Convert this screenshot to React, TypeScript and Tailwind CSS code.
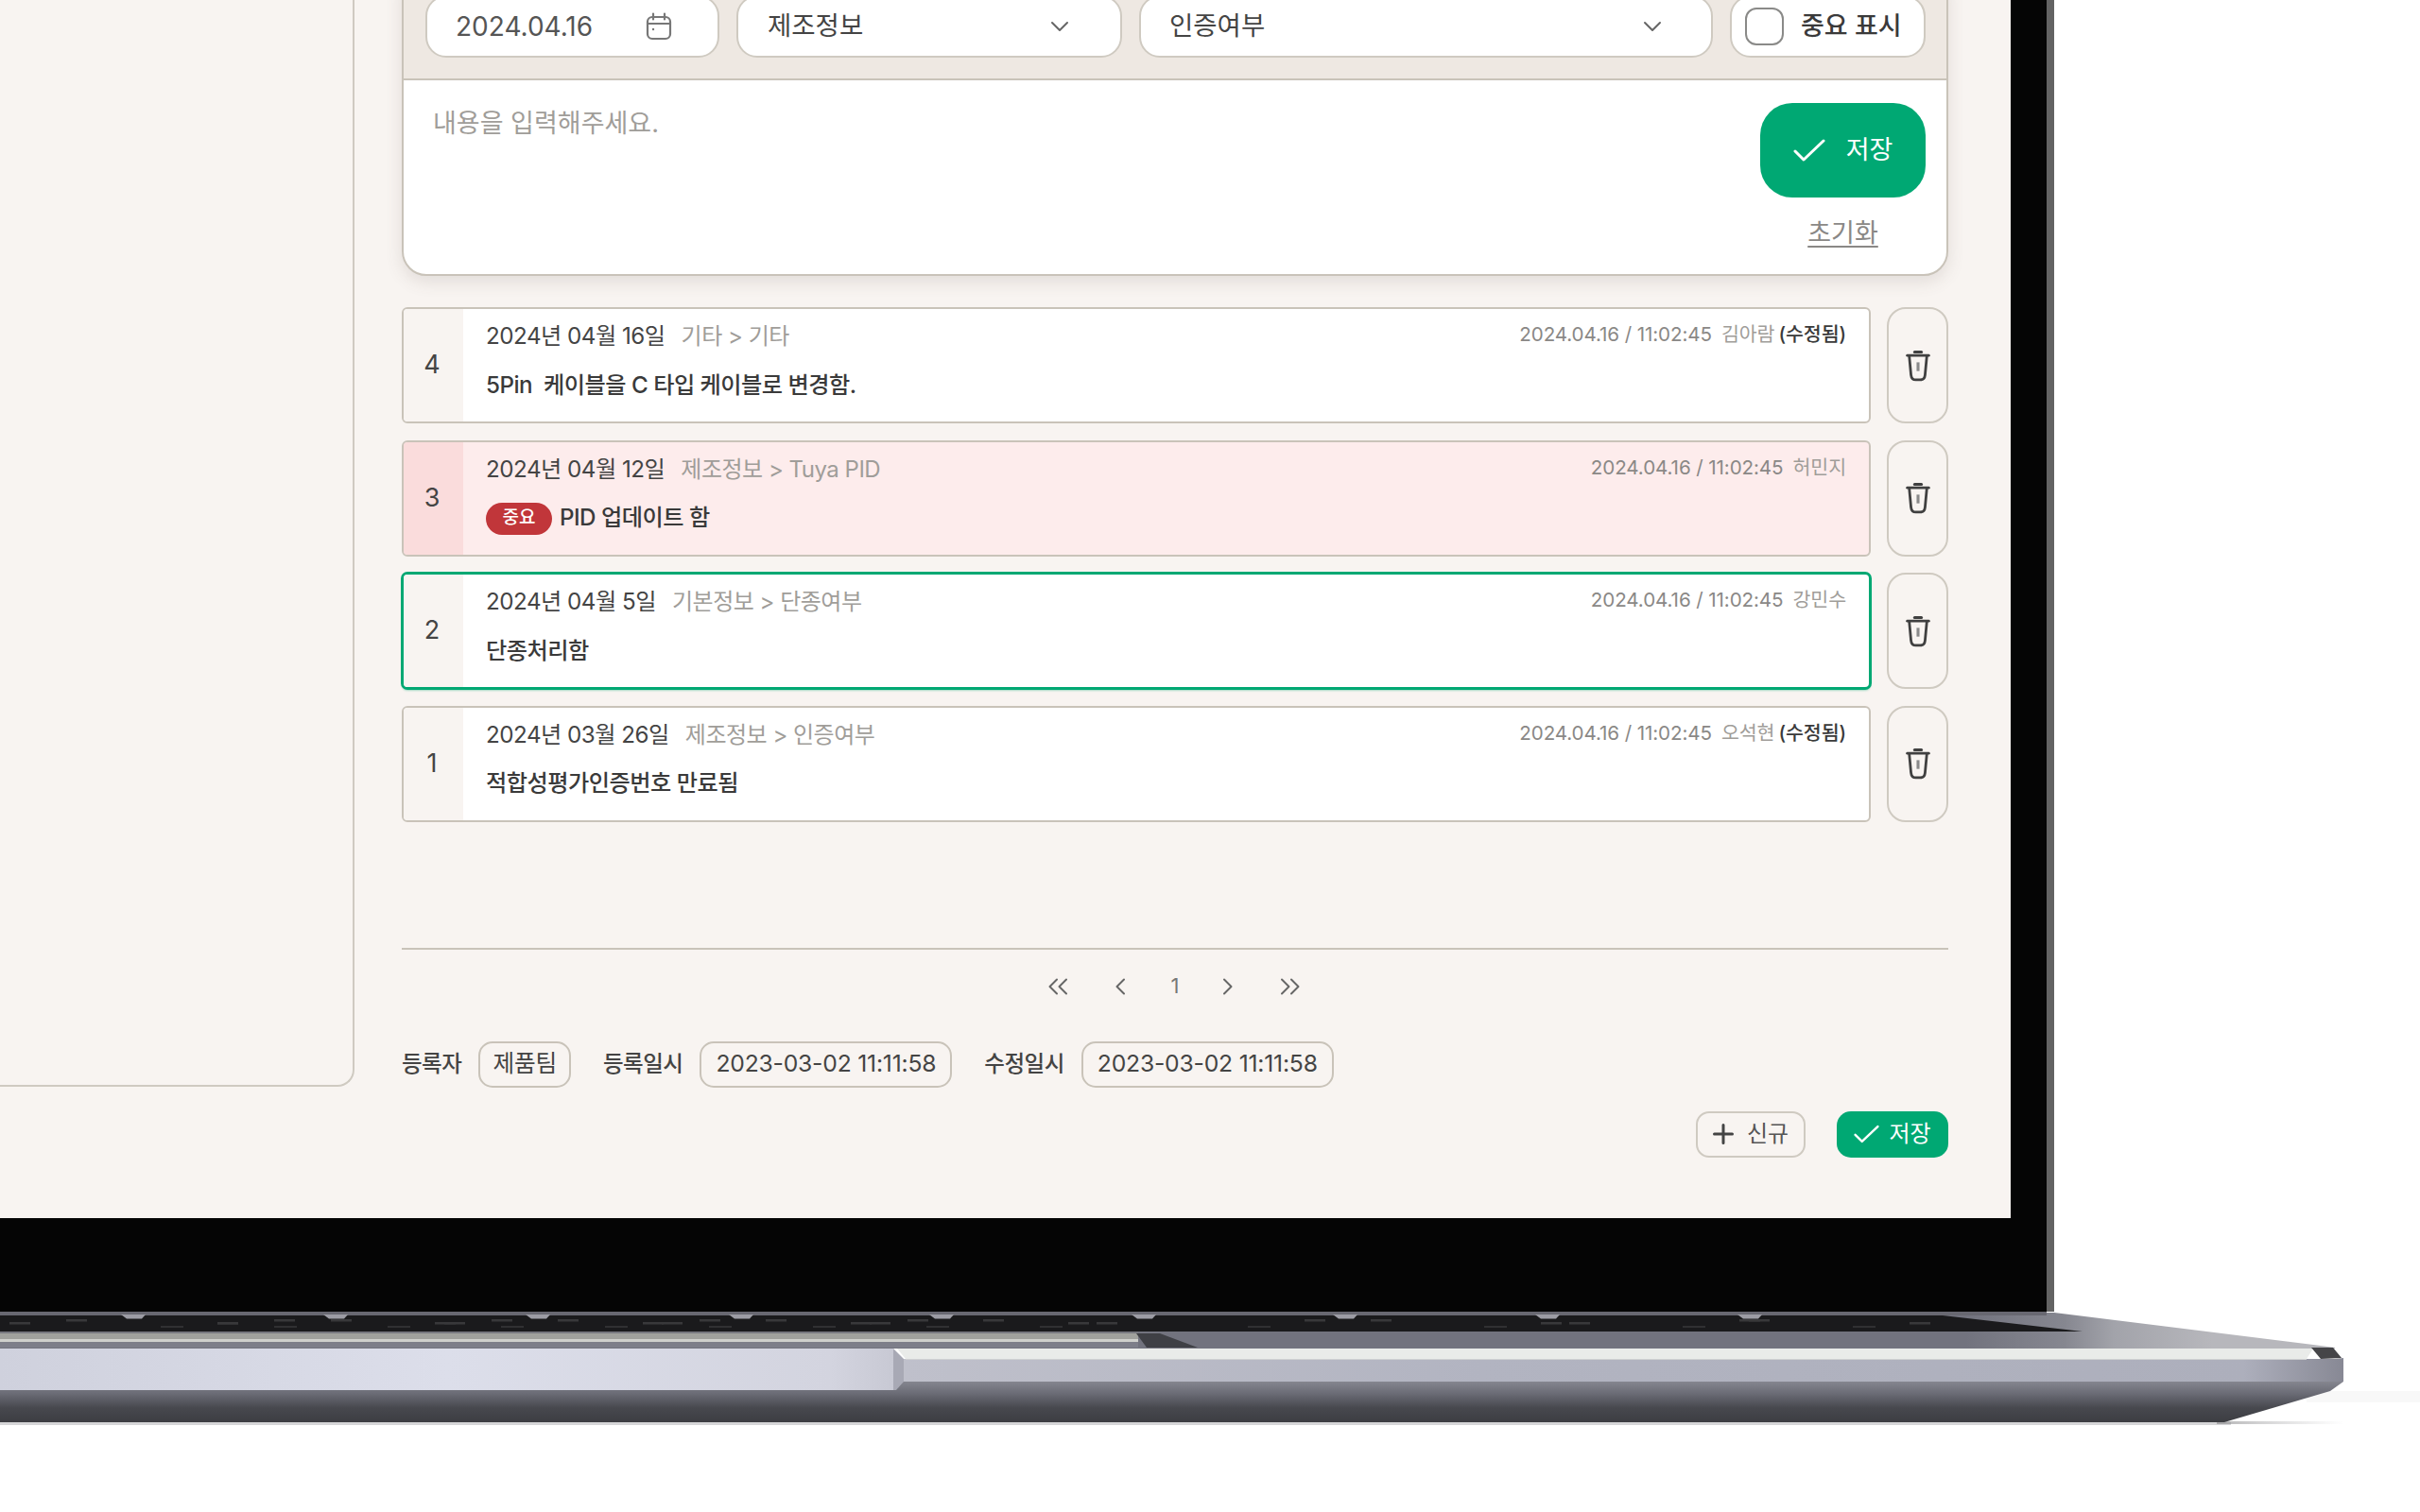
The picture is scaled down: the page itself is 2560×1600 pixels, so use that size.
import React from "react";

const FONT = "font-['Inter','Noto_Sans_CJK_KR',sans-serif]";

function Chevron() {
  return (
    <svg width="20" height="12" viewBox="0 0 20 12" fill="none" stroke="#666" strokeWidth="2" strokeLinecap="round" strokeLinejoin="round">
      <path d="M2 2l8 8 8-8" />
    </svg>
  );
}

function Calendar() {
  return (
    <svg width="28" height="30" viewBox="0 0 28 30" fill="none" stroke="#777" strokeWidth="2.2" strokeLinecap="round">
      <rect x="2" y="5" width="24" height="23" rx="5" />
      <path d="M2 12h24M8 1.5v6M20 1.5v6" />
      <circle cx="8" cy="18" r="1.2" fill="#777" stroke="none" />
    </svg>
  );
}

function Check({ w, h, sw }: { w: number; h: number; sw: number }) {
  return (
    <svg width={w} height={h} viewBox="0 0 34 24" fill="none" stroke="#fff" strokeWidth={sw} strokeLinecap="round" strokeLinejoin="round">
      <path d="M2 13l9 9L32 2" />
    </svg>
  );
}

function Trash() {
  return (
    <svg width="28" height="34" viewBox="0 0 26 33" fill="none" stroke="#404040" strokeWidth="2.7" strokeLinecap="round" strokeLinejoin="round">
      <path d="M2 6h22" />
      <path d="M9.5 2.5h7" strokeWidth="3" />
      <path d="M4 7l1.8 19c.3 3 2.3 5 5 5h4.4c2.7 0 4.7-2 5-5L22 7" />
      <path d="M13 13v9" strokeWidth="3" stroke="#8a8a8a" strokeLinecap="butt" />
    </svg>
  );
}

function ChevL({ double }: { double?: boolean }) {
  return (
    <svg width={double ? 22 : 12} height="18" viewBox={double ? "0 0 22 18" : "0 0 12 18"} fill="none" stroke="#666" strokeWidth="2" strokeLinecap="round" strokeLinejoin="round">
      <path d="M10 1.5L2.5 9l7.5 7.5" />
      {double && <path d="M20 1.5L12.5 9l7.5 7.5" />}
    </svg>
  );
}

function ChevR({ double }: { double?: boolean }) {
  return (
    <svg width={double ? 22 : 12} height="18" viewBox={double ? "0 0 22 18" : "0 0 12 18"} fill="none" stroke="#666" strokeWidth="2" strokeLinecap="round" strokeLinejoin="round">
      <path d="M2 1.5L9.5 9 2 16.5" />
      {double && <path d="M12 1.5L19.5 9 12 16.5" />}
    </svg>
  );
}

type Row = {
  n: number;
  date: string;
  path: string;
  meta: string;
  who: string;
  edited?: boolean;
  body: string;
  important?: boolean;
  active?: boolean;
};

const rows: Row[] = [
  { n: 4, date: "2024년 04월 16일", path: "기타 > 기타", meta: "2024.04.16 / 11:02:45", who: "김아람", edited: true, body: "5Pin  케이블을 C 타입 케이블로 변경함." },
  { n: 3, date: "2024년 04월 12일", path: "제조정보 > Tuya PID", meta: "2024.04.16 / 11:02:45", who: "허민지", body: "PID 업데이트 함", important: true },
  { n: 2, date: "2024년 04월 5일", path: "기본정보 > 단종여부", meta: "2024.04.16 / 11:02:45", who: "강민수", body: "단종처리함", active: true },
  { n: 1, date: "2024년 03월 26일", path: "제조정보 > 인증여부", meta: "2024.04.16 / 11:02:45", who: "오석현", edited: true, body: "적합성평가인증번호 만료됨" },
];

function LogRow({ r }: { r: Row }) {
  const frame = r.active
    ? "border-2 border-[#00a873] bg-white shadow-[0_0_0_1px_#00a873,0_2px_2px_rgba(0,168,115,0.35)]"
    : r.important
    ? "border-2 border-[#c9c3b9] bg-[#fdecec]"
    : "border-2 border-[#c9c3b9] bg-white";
  return (
    <div className="flex gap-[17px] h-[123px]">
      <div className={`flex-1 flex rounded-[6px] overflow-hidden ${frame}`}>
        <div className={`w-[63px] shrink-0 flex items-center justify-center pr-[3px] text-[27px] text-[#444] ${r.important ? "bg-[#fadcdc]" : "bg-[#f8f4f1]"}`}>
          {r.n}
        </div>
        <div className="flex-1 pl-[24px] pr-[24px] flex flex-col">
          <div className="flex justify-between h-[61px] items-center mt-[-1px]">
            <div className="flex items-center gap-[17px] tracking-[-0.5px] self-center">
              <span className="text-[24.2px] text-[#444]">{r.date}</span>
              <span className="text-[24px] text-[#a09d99]">{r.path}</span>
            </div>
            <div className="text-[20.6px] text-[#8a8886] self-start mt-[13px] flex gap-[10px] tracking-[-0.1px]">
              <span>{r.meta}</span>
              <span className="flex gap-[4px]">
                <span className="text-[#a09d99]">{r.who}</span>
                {r.edited && <span className="text-[#3a3a3a] font-medium">(수정됨)</span>}
              </span>
            </div>
          </div>
          <div className="flex items-center gap-[8px] h-[42px]">
            {r.important && (
              <span className="w-[70px] h-[34px] rounded-full bg-[#c1363a] text-white text-[19px] font-medium flex items-center justify-center">중요</span>
            )}
            <span className="text-[24.2px] font-medium text-[#3a3a3a] tracking-[-0.5px] whitespace-pre">{r.body}</span>
          </div>
        </div>
      </div>
      <button className="w-[65px] rounded-[20px] border-2 border-[#cfcac1] bg-[#f8f4f1] flex items-center justify-center">
        <Trash />
      </button>
    </div>
  );
}

const Label = ({ children }: { children: React.ReactNode }) => (
  <span className="text-[23.5px] font-medium text-[#444] tracking-[-0.5px]">{children}</span>
);
const Chip = ({ children, tight }: { children: React.ReactNode; tight?: boolean }) => (
  <span className={`h-[49px] rounded-[15px] border-2 border-[#c9c3b9] flex items-center text-[24.7px] text-[#444] tracking-[-0.2px] ${tight ? "px-[13px]" : "px-[15px]"}`}>{children}</span>
);

function Base() {
  const tabs = [141, 355, 569, 784, 996, 1210, 1423, 1637, 1851];
  const keysA = [10, 70, 230, 290, 460, 520, 680, 740, 900, 960, 1130, 1450, 1660, 1850];
  const keysB = [170, 290, 410, 530, 640, 750, 860, 980, 1100, 1320, 1570, 1780, 1960];
  return (
    <svg width="2560" height="212" viewBox="0 1388 2560 212" className="block">
      <defs>
        <linearGradient id="under" gradientUnits="userSpaceOnUse" x1="0" y1="1462" x2="0" y2="1505">
          <stop offset="0" stopColor="#85868f" />
          <stop offset="0.3" stopColor="#6a6b75" />
          <stop offset="0.65" stopColor="#47484e" />
          <stop offset="1" stopColor="#3c3d42" />
        </linearGradient>
        <linearGradient id="deckR" gradientUnits="userSpaceOnUse" x1="2080" y1="0" x2="2340" y2="0">
          <stop offset="0" stopColor="#72737e" />
          <stop offset="0.4" stopColor="#868790" />
          <stop offset="0.6" stopColor="#a2a3aa" />
          <stop offset="1" stopColor="#b7b7bc" />
        </linearGradient>
        <linearGradient id="lip" x1="0" y1="0" x2="1" y2="0">
          <stop offset="0" stopColor="#cfd1dd" />
          <stop offset="0.5" stopColor="#dcdeea" />
          <stop offset="0.93" stopColor="#d3d4df" />
          <stop offset="1" stopColor="#c8c9d4" />
        </linearGradient>
        <linearGradient id="lipR" gradientUnits="userSpaceOnUse" x1="956" y1="0" x2="2480" y2="0">
          <stop offset="0" stopColor="#bfc0cb" />
          <stop offset="0.4" stopColor="#b2b4c1" />
          <stop offset="0.93" stopColor="#adafbc" />
          <stop offset="1" stopColor="#878894" />
        </linearGradient>
        <linearGradient id="shadow" gradientUnits="userSpaceOnUse" x1="2350" y1="0" x2="2480" y2="0">
          <stop offset="0" stopColor="#88888a" stopOpacity="0.6" />
          <stop offset="1" stopColor="#aaaaac" stopOpacity="0" />
        </linearGradient>
      </defs>
      {/* floor shadows */}
      <rect x="0" y="1505" width="2360" height="3" fill="#d6d6d8" />
      <rect x="2345" y="1504" width="135" height="3" fill="url(#shadow)" />
      <rect x="2440" y="1472" width="120" height="12" fill="#f8f8f8" />
      {/* body */}
      <path d="M0 1462H2479L2465 1472L2353 1505H0Z" fill="url(#under)" />
      {/* deck */}
      <path d="M0 1389H2173L2447 1423L2470 1426V1427H0Z" fill="url(#deckR)" />
      <rect x="0" y="1388" width="2165" height="4" fill="#686871" />
      {/* keyboard well */}
      <path d="M0 1392H2055L2203 1409H0Z" fill="#1a1a1c" />
      {keysA.concat(keysB.map((k) => k + 60)).map((x, i) => (
        <rect key={i} x={x} y={i % 2 ? 1396 : 1399} width="22" height="2.5" fill="#38383a" />
      ))}
      {keysB.map((x) => (
        <rect key={x} x={x} y="1403" width="24" height="2" fill="#303032" />
      ))}
      {tabs.map((x) => (
        <path key={x} d={`M${x - 13} 1391H${x + 13}L${x + 9} 1395.5H${x - 7}Z`} fill="#9c9ca4" />
      ))}
      {/* hinge strip */}
      <rect x="0" y="1409" width="1204" height="2" fill="#77787f" />
      <rect x="0" y="1411" width="1204" height="6" fill="#a0a19d" />
      <rect x="0" y="1417" width="1204" height="3" fill="#cfd0cc" />
      <rect x="0" y="1420" width="1204" height="6" fill="#7d7e89" />
      <path d="M1202 1411H1227L1267 1426H1213Z" fill="#3f4045" />
      {/* lip */}
      <path d="M956 1438H2470L2479 1437V1462H956Z" fill="url(#lipR)" />
      <path d="M949 1427H2447L2440 1438H958Z" fill="#e9ebe9" />
      <rect x="958" y="1438" width="1482" height="1" fill="#cfd1d2" />
      <path d="M2445 1426H2468L2477 1437L2455 1438Z" fill="#454548" />
      <path d="M945 1427L956 1438V1462L948 1471H945Z" fill="#a8a9b5" />
      <path d="M0 1427H945V1471H0Z" fill="url(#lip)" />
    </svg>
  );
}

export default function App() {
  return (
    <div className={`w-[2560px] h-[1600px] bg-white overflow-hidden ${FONT}`}>
      <div className="w-[2173px] h-[1388px] bg-[#050505] border-r-[8px] border-[#636363]">
        <div className="w-[2127px] h-[1289px] bg-[#f8f4f1] flex overflow-hidden">
          {/* left panel */}
          <div className="w-[425px] shrink-0">
            <div className="w-[375px] h-[1150px] border-r-2 border-b-2 border-[#cfcac1] rounded-br-[18px]" />
          </div>
          {/* main */}
          <div className="w-[1636px] flex flex-col -mt-[21px]">
            <div className="rounded-b-[26px] border-2 border-[#c9c3b9] bg-white shadow-[0_6px_18px_rgba(90,80,70,0.14)] overflow-hidden">
              <div className="bg-[#eee8e2] border-b-2 border-[#c9c3b9] pt-[14px] pb-[22px] pl-[23px] pr-[22px] flex gap-[18px] h-[104px]">
                <div className="w-[311px] rounded-[22px] border-2 border-[#cfcac1] bg-white flex items-center pl-[30px] pr-[48px] justify-between">
                  <span className="text-[28px] text-[#555]">2024.04.16</span>
                  <Calendar />
                </div>
                <div className="w-[408px] rounded-[22px] border-2 border-[#cfcac1] bg-white flex items-center pl-[31px] pr-[54px] justify-between">
                  <span className="text-[27.5px] text-[#444]">제조정보</span>
                  <Chevron />
                </div>
                <div className="w-[607px] rounded-[22px] border-2 border-[#cfcac1] bg-white flex items-center pl-[30px] pr-[52px] justify-between">
                  <span className="text-[27.5px] text-[#444]">인증여부</span>
                  <Chevron />
                </div>
                <div className="w-[207px] rounded-[22px] border-2 border-[#cfcac1] bg-white flex items-center pl-[14px] gap-[18px]">
                  <span className="w-[41px] h-[40px] rounded-[12px] border-2 border-[#8a8a88] bg-white shrink-0" />
                  <span className="text-[27px] font-medium text-[#3a3a3a] whitespace-nowrap">중요 표시</span>
                </div>
              </div>
              <div className="flex justify-between h-[205px] pl-[31px] pr-[22px]">
                <div className="text-[27px] text-[#a09d99] pt-[26px]">내용을 입력해주세요.</div>
                <div className="w-[175px] flex flex-col items-center pt-[24px]">
                  <button className="w-[175px] h-[100px] rounded-[34px] bg-[#00a873] text-white flex items-center justify-center gap-[22px] text-[27px]">
                    <Check w={34} h={24} sw={3} />
                    저장
                  </button>
                  <span className="mt-[18px] text-[27px] text-[#8a8886] underline underline-offset-4">초기화</span>
                </div>
              </div>
            </div>

            <div className="flex flex-col gap-[17.5px] mt-[33px]">
              {rows.map((r) => (
                <LogRow key={r.n} r={r} />
              ))}
            </div>

            <div className="h-[2px] bg-[#c9c3b9] mt-[133px]" />

            <div className="flex items-center justify-center h-[36px] mt-[21px] text-[22px] text-[#777]">
              <span className="ml-[-2px] w-[22px] flex"><ChevL double /></span>
              <span className="ml-[49px] flex"><ChevL /></span>
              <span className="ml-[46px] w-[12px] text-center">1</span>
              <span className="ml-[44px] flex"><ChevR /></span>
              <span className="ml-[49px] flex"><ChevR double /></span>
            </div>

            <div className="flex items-center mt-[40px]">
              <Label>등록자</Label>
              <div className="ml-[18px]"><Chip tight>제품팀</Chip></div>
              <div className="ml-[34px]"><Label>등록일시</Label></div>
              <div className="ml-[18px]"><Chip>2023-03-02 11:11:58</Chip></div>
              <div className="ml-[34px]"><Label>수정일시</Label></div>
              <div className="ml-[18px]"><Chip>2023-03-02 11:11:58</Chip></div>
            </div>

            <div className="flex justify-end gap-[33px] mt-[25px]">
              <button className="w-[116px] h-[49px] rounded-[14px] border-2 border-[#cfcac1] flex items-center justify-center gap-[14px] text-[24px] text-[#555]">
                <svg width="22" height="22" viewBox="0 0 22 22" stroke="#444" strokeWidth="3" strokeLinecap="round">
                  <path d="M11 1.5v19M1.5 11h19" />
                </svg>
                신규
              </button>
              <button className="w-[118px] h-[49px] rounded-[15px] bg-[#00a873] text-white flex items-center justify-center gap-[10px] text-[24px]">
                <Check w={27} h={20} sw={3} />
                저장
              </button>
            </div>
          </div>
        </div>
      </div>
      <Base />
    </div>
  );
}
